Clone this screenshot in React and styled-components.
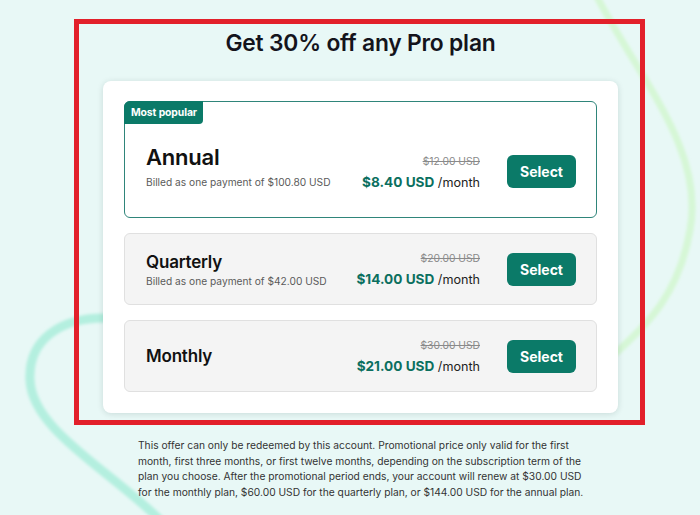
import React from 'react'
import styled, { createGlobalStyle } from 'styled-components'

const GlobalStyle = createGlobalStyle`
    html, body {
        margin:0;
        padding:0;
        background:#e8f8f6;
        font-family:Inter, "Noto Sans", "Liberation Sans", sans-serif;
    }
`

const plans = [
    { id: 'annual', name: 'Annual', billed: 'Billed as one payment of $100.80 USD', old: '$12.00 USD', price: '$8.40 USD', popular: true },
    { id: 'quarterly', name: 'Quarterly', billed: 'Billed as one payment of $42.00 USD', old: '$20.00 USD', price: '$14.00 USD' },
    { id: 'monthly', name: 'Monthly', old: '$30.00 USD', price: '$21.00 USD' },
]

function Backdrop() {
    return (
        <Swirls viewBox="0 0 700 515" preserveAspectRatio="none">
            <defs>
                <filter id="soft" x="-20%" y="-20%" width="140%" height="140%">
                    <feGaussianBlur stdDeviation="1.6" />
                </filter>
            </defs>
            <path d="M596 -5 C 640 80, 705 150, 690 230 C 678 300, 640 330, 617 352"
                fill="none" stroke="#d6f7d6" strokeWidth="7" strokeLinecap="round" filter="url(#soft)" />
            <path d="M104 318 C 60 318, 28 340, 30 380 C 32 430, 110 470, 160 520"
                fill="none" stroke="#b4efdf" strokeWidth="9" strokeLinecap="round" filter="url(#soft)" />
        </Swirls>
    )
}

function PlanOption({ plan }) {
    return (
        <Option $popular={plan.popular}>
            {plan.popular && <Badge>Most popular</Badge>}
            <OptionInfo>
                <PlanName $big={plan.popular}>{plan.name}</PlanName>
                {plan.billed && <Billed $big={plan.popular}>{plan.billed}</Billed>}
            </OptionInfo>
            <PriceBlock>
                <OldPrice>{plan.old}</OldPrice>
                <NewPrice>
                    <strong>{plan.price}</strong> /month
                </NewPrice>
            </PriceBlock>
            <SelectButton>Select</SelectButton>
        </Option>
    )
}

function App() {
    return (
        <Page>
            <GlobalStyle />
            <Backdrop />
            <Content>
                <Frame>
                    <Title>Get 30% off any Pro plan</Title>
                    <Card>
                        {plans.map(plan => (
                            <PlanOption key={plan.id} plan={plan} />
                        ))}
                    </Card>
                </Frame>
                <Terms>
                    This offer can only be redeemed by this account. Promotional price only valid for the first
                    month, first three months, or first twelve months, depending on the subscription term of the
                    plan you choose. After the promotional period ends, your account will renew at $30.00 USD
                    for the monthly plan, $60.00 USD for the quarterly plan, or $144.00 USD for the annual plan.
                </Terms>
            </Content>
        </Page>
    )
}

export default App

const Page = styled.div`
    position:relative;
    width:700px;
    height:515px;
    overflow:hidden;
    background:#e8f8f6;
`
const Swirls = styled.svg`
    position:absolute;
    inset:0;
    width:100%;
    height:100%;
`
const Content = styled.div`
    position:relative;
    display:flex;
    flex-direction:column;
    align-items:flex-start;
    padding:19px 0 0 74px;
`
const Frame = styled.div`
    width:571px;
    box-sizing:border-box;
    border:5px solid #e2202a;
    display:flex;
    flex-direction:column;
    padding:0 0 7px 24px;
`
const Title = styled.h1`
    margin:4px 0 15px;
    width:515px;
    text-align:center;
    height:38px;
    font-size:22.8px;
    line-height:30px;
    font-weight:600;
    color:#14141c;
    letter-spacing:-0.2px;
`
const Card = styled.div`
    width:515px;
    box-sizing:border-box;
    background:#fff;
    border-radius:8px;
    box-shadow:0 1px 6px rgba(0,40,40,0.14);
    padding:20px 21px 21px;
    display:flex;
    flex-direction:column;
    gap:15px;
`
const Option = styled.div`
    position:relative;
    display:flex;
    align-items:center;
    box-sizing:border-box;
    height:${p => p.$popular ? '117px' : '72px'};
    padding:${p => p.$popular ? '24px 20px 0 21px' : '0 20px 0 21px'};
    border-radius:6px;
    border:1px solid ${p => p.$popular ? '#2f857a' : '#e0e0e0'};
    background:${p => p.$popular ? '#fff' : '#f4f4f4'};
`
const Badge = styled.div`
    position:absolute;
    left:-1px;
    top:-1px;
    height:23px;
    padding:0 6px 0 7px;
    display:flex;
    align-items:center;
    background:#0b7a68;
    color:#fff;
    font-size:10.4px;
    font-weight:700;
    letter-spacing:-0.1px;
    border-radius:6px 0 4px 0;
`
const OptionInfo = styled.div`
    flex-grow:1;
    display:flex;
    flex-direction:column;
`
const PlanName = styled.div`
    font-size:${p => p.$big ? '22px' : '17px'};
    font-weight:600;
    color:#111;
    line-height:${p => p.$big ? '28px' : '22px'};
    letter-spacing:-0.2px;
    margin-top:${p => p.$big ? '-12px' : '0'};
`
const Billed = styled.div`
    font-size:10.2px;
    color:#5a5a5a;
    margin-top:${p => p.$big ? '5px' : '2px'};
`
const PriceBlock = styled.div`
    display:flex;
    flex-direction:column;
    align-items:flex-end;
    margin-right:27px;
`
const OldPrice = styled.div`
    font-size:10.3px;
    color:#8a8a8a;
    text-decoration:line-through;
    line-height:15px;
`
const NewPrice = styled.div`
    font-size:12.6px;
    color:#222;
    margin-top:5px;
    strong{
        font-size:13.6px;
        font-weight:700;
        color:#0b6f5f;
    }
`
const SelectButton = styled.button`
    width:69px;
    height:33px;
    border:none;
    border-radius:6px;
    background:#0b7a68;
    color:#fff;
    font-family:inherit;
    font-size:14px;
    font-weight:700;
    cursor:pointer;
`
const Terms = styled.p`
    width:446px;
    margin:13px 0 0 64px;
    font-size:10.25px;
    line-height:15.7px;
    color:#333;
`
